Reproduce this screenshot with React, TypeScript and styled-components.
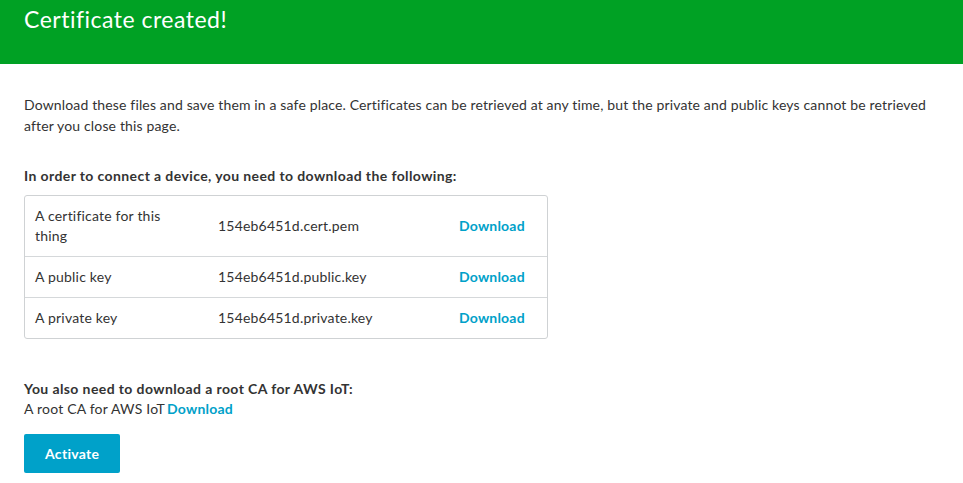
import React from "react";
import styled, { createGlobalStyle } from "styled-components";

const GlobalStyle = createGlobalStyle`
  html, body {
    margin: 0;
    padding: 0;
    background: #ffffff;
  }
  body {
    font-family: Lato, "Liberation Sans", Arial, sans-serif;
    color: #333333;
    letter-spacing: 0.2px;
  }
`;

const Page = styled.div`
  width: 963px;
  min-height: 483px;
  background: #ffffff;
`;

const Banner = styled.header`
  height: 64px;
  background: #00a124;
  padding: 4px 24px 0;
  box-sizing: border-box;
`;

const Title = styled.h1`
  margin: 0;
  font-size: 23px;
  line-height: 30px;
  font-weight: 400;
  letter-spacing: 0.5px;
  color: #ffffff;
`;

const Content = styled.main`
  padding: 30px 24px 0;
  display: flex;
  flex-direction: column;
  align-items: flex-start;
`;

const Paragraph = styled.p`
  margin: 0;
  font-size: 14px;
  line-height: 21px;
  letter-spacing: 0.15px;
  color: #333333;
`;

const Heading = styled.h2<{ $top: number }>`
  margin: ${(p) => p.$top}px 0 0;
  font-size: 14px;
  line-height: 21px;
  font-weight: 700;
  letter-spacing: 0.4px;
  color: #333333;
`;

const Table = styled.div`
  margin-top: 9px;
  width: 524px;
  border: 1px solid #cfd2d4;
  border-radius: 3px;
  box-sizing: border-box;
`;

const Row = styled.div`
  display: grid;
  grid-template-columns: 183px 241px 1fr;
  align-items: center;
  & + & {
    border-top: 1px solid #d5d8da;
  }
`;

const Cell = styled.div<{ $narrow?: boolean }>`
  padding: 10px ${(p) => (p.$narrow ? "30px" : "10px")} 10px 10px;
  font-size: 14px;
  line-height: 20px;
  color: #333333;
`;

const Link = styled.a`
  font-size: 14px;
  line-height: 20px;
  font-weight: 700;
  color: #00a1c9;
  text-decoration: none;
  cursor: pointer;
`;

const Line = styled.div`
  font-size: 14px;
  line-height: 20px;
  color: #333333;
  display: flex;
  gap: 2px;
`;

const Button = styled.button`
  margin-top: 15px;
  height: 39px;
  padding: 0 21px;
  border: none;
  border-radius: 2px;
  background: #00a1c9;
  color: #ffffff;
  font-family: inherit;
  font-size: 14px;
  font-weight: 700;
  letter-spacing: 0.3px;
  cursor: pointer;
`;

const files = [
  { label: "A certificate for this thing", name: "154eb6451d.cert.pem" },
  { label: "A public key", name: "154eb6451d.public.key" },
  { label: "A private key", name: "154eb6451d.private.key" },
];

export default function App() {
  return (
    <Page>
      <GlobalStyle />
      <Banner>
        <Title>Certificate created!</Title>
      </Banner>
      <Content>
        <Paragraph>
          Download these files and save them in a safe place. Certificates can be retrieved at any time, but the
          private and public keys cannot be retrieved after you close this page.
        </Paragraph>
        <Heading $top={29}>In order to connect a device, you need to download the following:</Heading>
        <Table>
          {files.map((f) => (
            <Row key={f.name}>
              <Cell $narrow>{f.label}</Cell>
              <Cell>{f.name}</Cell>
              <Cell>
                <Link>Download</Link>
              </Cell>
            </Row>
          ))}
        </Table>
        <Heading $top={39}>You also need to download a root CA for AWS IoT:</Heading>
        <Line>
          <span>A root CA for AWS IoT</span>
          <Link>Download</Link>
        </Line>
        <Button>Activate</Button>
      </Content>
    </Page>
  );
}
